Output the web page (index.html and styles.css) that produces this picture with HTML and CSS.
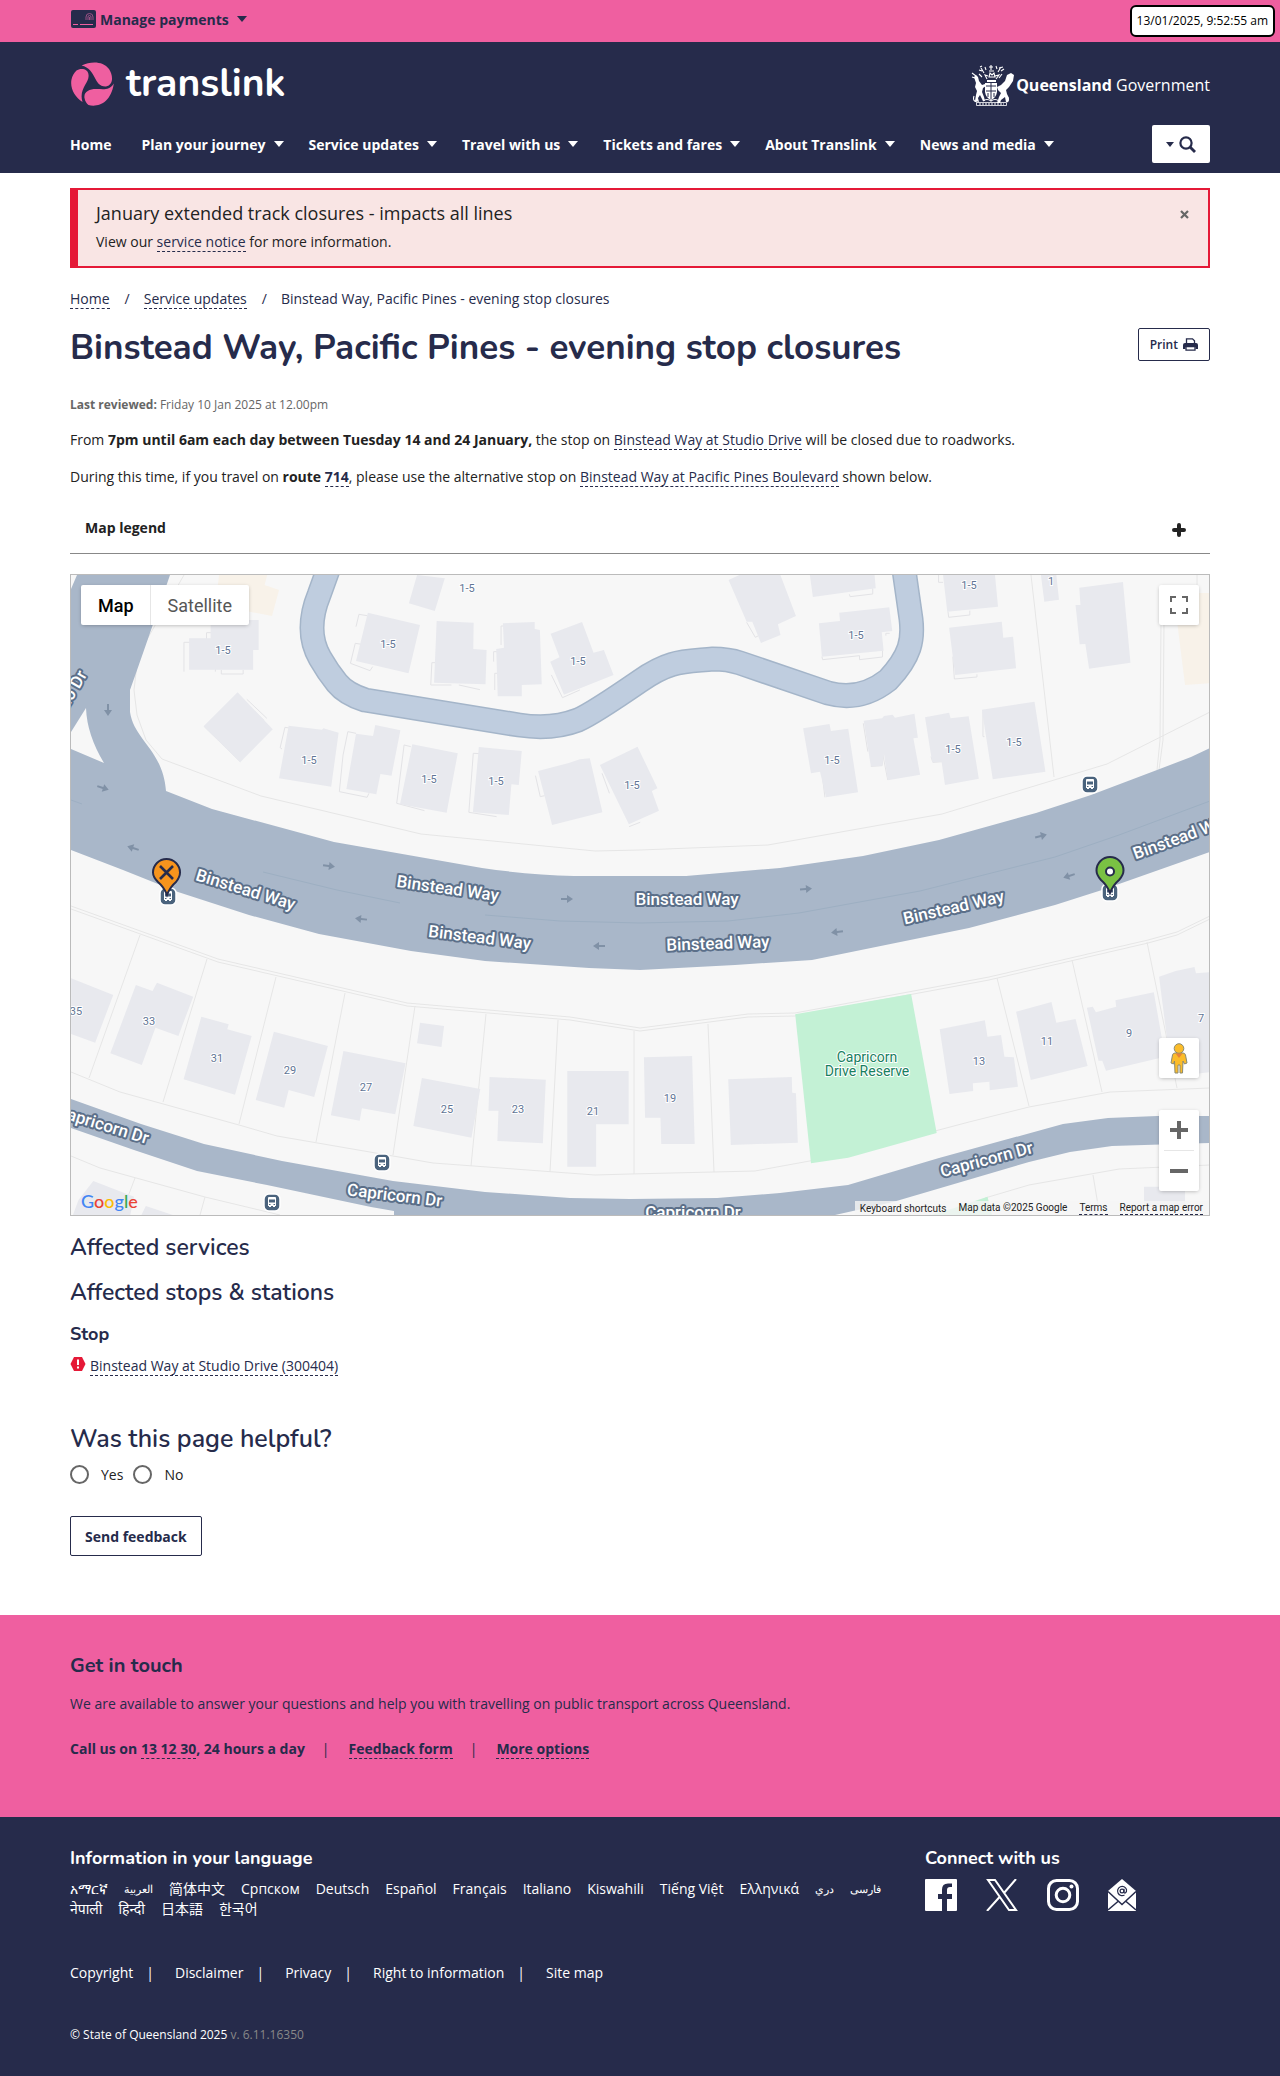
FILE: index.html
```html
<!DOCTYPE html>
<html lang="en">
<head>
<meta charset="utf-8">
<meta name="viewport" content="width=device-width, initial-scale=1">
<title>Binstead Way, Pacific Pines - evening stop closures | Translink</title>
<link rel="stylesheet" href="styles.css">
</head>
<body>
<div class="topbar">
  <div class="wrap">
    <button class="payments" type="button">
      <svg width="25" height="18" viewBox="0 0 25 18" aria-hidden="true"><rect width="25" height="18" rx="2" fill="#262b4b"/><path d="M2 14.5h5M9 14.500h13" stroke="#ef5fa0" stroke-width="1"/><path d="M15 10v-3a3.500 3.500 0 0 1 7 0v3M17 10v-3a1.500 1.500 0 0 1 3 0v3M18.500 7v3" fill="none" stroke="#a5558a" stroke-width=".9"/></svg>
      <span>Manage payments</span><i class="caret"></i>
    </button>
  </div>
  <time class="clock">13/01/2025, 9:52:55 am</time>
</div>

<header class="header">
  <div class="wrap">
    <div class="brands">
      <a class="brand" href="#">
        <svg width="43" height="44" viewBox="0 0 43 44" fill="#ef5fa0" aria-hidden="true"><path d="M10.600 3.500C20-1 32-1 38 7C42 13 43 23 35 24.500C22 25 26 7 10.600 3.500Z"/><path d="M5.500 8.500C9 6 17.500 6 17.600 13.500C18 21 7.500 27 11.500 40C4 35-1 27 .4 18C1 14 3 11 5.500 8.500Z"/><path d="M42.800 21.500C38 29 32 27 25 27C18 27 12.500 30 13.500 36C14 39 15.500 41.500 17.500 43C27 45.500 40 41 42.800 21.500Z"/></svg>
        <span>translink</span>
      </a>
      <a class="gov" href="#">
        <svg width="44" height="42" viewBox="0 0 44 42" fill="#fff" stroke="none" aria-hidden="true">
          <path d="M3 13l2-2 2 2 1 4 3 4 3-1 1 2-3 2-1 4 2 5 1 4h-2l-3-6-2 3 1 4-4-1 1-6 1-4-2-4 1-4z"/>
          <path d="M34 17l2-6 4-2 3 2-1 6-4 6-3 3 1 4 2 4-1 4h-2l-1-5-4 3-1 3h-3l2-6 2-4-3-3-1-3 4-2z"/>
          <path d="M14 19h12v9q-1 6-6 8q-5-2-6-8z"/>
          <path d="M15 22h10M15 27h10M20 19v16M17 29v4M23 29v4" stroke="#262b4b" stroke-width="1" fill="none"/>
          <path d="M16 16h9v2h-9z"/>
          <path d="M16 15l-2-4 3 1M25 15l3-4-4 1M18 13l1-4 2 2 2-2 1 4zM20 1v5M18 3h4M18 7h5M13 9l-3-5M11 7l-3-1M9 3l2-1M27 8l3-5M30 7l3-2M28 4l4-1M15 6l-1-3M26 5l-1-3M8 10l3 3M31 10l-3 4M1 9l4 3M1 13l3 1M3 32q-2 5 3 6M36 33q3 3 0 5M12 37q4-3 8 0q4-3 8 0" fill="none" stroke="#fff" stroke-width="1.100"/>
          <path d="M5.500 38.500h30v3h-30z" fill="none" stroke="#fff" stroke-width=".8"/><path d="M8 40h25" stroke="#fff" stroke-dasharray="2 1"/>
        </svg>
        <span><b>Queensland</b> Government</span>
      </a>
    </div>
    <nav class="nav" aria-label="Main">
      <ul>
        <li><a href="#">Home</a></li>
        <li><a href="#">Plan your journey<i class="caret"></i></a></li>
        <li><a href="#">Service updates<i class="caret"></i></a></li>
        <li><a href="#">Travel with us<i class="caret"></i></a></li>
        <li><a href="#">Tickets and fares<i class="caret"></i></a></li>
        <li><a href="#">About Translink<i class="caret"></i></a></li>
        <li><a href="#">News and media<i class="caret"></i></a></li>
      </ul>
      <button class="search" type="button" aria-label="Search"><i class="caret small"></i><svg width="17" height="17" viewBox="0 0 17 17" fill="none" stroke="#262b4b" aria-hidden="true"><circle cx="7" cy="7" r="5.600" stroke-width="2.200"/><path d="M11 11l5 5" stroke-width="2.800"/></svg></button>
    </nav>
  </div>
</header>

<main class="wrap">
  <section class="alert">
    <div>
      <h2>January extended track closures - impacts all lines</h2>
      <p>View our <a href="#">service notice</a> for more information.</p>
    </div>
    <button type="button" class="close" aria-label="Close"><svg width="9" height="9" viewBox="0 0 9 9" aria-hidden="true"><path d="M1 1l7 7M8 1l-7 7" stroke="#666" stroke-width="2.200"/></svg></button>
  </section>

  <nav class="crumbs" aria-label="Breadcrumb"><ol><li><a href="#">Home</a></li><li><a href="#">Service updates</a></li><li>Binstead Way, Pacific Pines - evening stop closures</li></ol></nav>

  <div class="title">
    <h1>Binstead Way, Pacific Pines - evening stop closures</h1>
    <button class="print" type="button">Print <svg width="15" height="13" viewBox="0 0 15 13" aria-hidden="true"><path d="M3.500 6V.8h6l2 2V6" fill="none" stroke="#262b4b" stroke-width="1.300"/><path d="M0 7q0-2 2-2h11q2 0 2 2v4h-2.500v-2h-10v2H0z" fill="#262b4b"/><path d="M3 8.700h9v3.500H3z" fill="#fff" stroke="#262b4b" stroke-width="1.300"/></svg></button>
  </div>

  <p class="reviewed"><b>Last reviewed:</b> Friday 10 Jan 2025 at 12.00pm</p>
  <div class="copy">
    <p>From <b>7pm until 6am each day between Tuesday 14 and 24 January,</b> the stop on <a href="#">Binstead Way at Studio Drive</a> will be closed due to roadworks.</p>
    <p>During this time, if you travel on <b>route <a href="#">714</a></b>, please use the alternative stop on <a href="#">Binstead Way at Pacific Pines Boulevard</a> shown below.</p>
  </div>

  <button class="legend" type="button" aria-expanded="false"><span>Map legend</span><svg width="14" height="14" viewBox="0 0 14 14" aria-hidden="true"><path d="M7 2v10M2 7h10" stroke="#222" stroke-width="4" stroke-linecap="round"/></svg></button>

  <div class="map">
    <svg class="tiles" viewBox="71 575 1138 640" preserveAspectRatio="xMidYMid slice" role="img" aria-label="Map of stops on Binstead Way">
      <defs>
        <g id="bus"><rect x="-8" y="-8" width="16" height="17" rx="5" fill="#4a637d" stroke="#fff" stroke-width="1.500"/><path d="M-4-4q0-1 1-1h6q1 0 1 1v8h-1v1h-2v-1h-2v1h-2v-1h-1z" fill="#fff"/><path d="M-3-2.500h6v3h-6z" fill="#4a637d"/><path d="M-3 2.500h1.500M1.500 2.500h1.500" stroke="#4a637d"/></g>
        <path id="arrow" d="M-6-1h6v-3l6 4-6 4v-3h-6z" fill="#8091a6"/>
      </defs>
      <rect x="71" y="575" width="1138" height="640" fill="#f7f7f7"/>
      <g class="plots">
        <path d="M184 575L161 615 138 655 134 690 137 715 146 740 162 759 261 796 421 834 595 851 640 850 768 845 942 814 1107 764 1210 712"/>
        <path d="M1031 575L1054 777M1197 575V592"/>
        <path d="M71 906L218 959 407 1003 570 1017 640 1028 748 1014 795 1013 989 977 1148 940 1177 932 1210 916" /><path d="M71 909L218 962 407 1006 570 1020 640 1031 748 1017 795 1016 989 980 1148 943 1177 935 1210 919"/>
        <path d="M140 935L89 1078M207 959L163 1102M276 977L239 1124M345 993L316 1142M415 1006L393 1155M486 1014L471 1166M558 1020L550 1172M634 1031V1174M708 1024L714 1172M997 978L1029 1106M1072 960L1102 1092M1147 942L1177 1088"/>
        <path d="M71 1072L120 1092 239 1125 277 1136 393 1156 433 1163 595 1175 630 1174 755 1171 848 1154 969 1122 1029 1107 1110 1092 1210 1088"/>
        <path d="M71 1156L100 1168 205 1197 280 1215M135 1178L121 1215M205 1197L200 1215M985 1198L1029 1185 1119 1169 1210 1165M1093 1175L1098 1205"/>
        <path d="M1161 622L1160 740 1157 770M1164 622L1163 740 1159 770" stroke="#dfe1e4"/>
      </g>
      <g transform="translate(60 565) scale(.37 .3333)">
        <path class="outline" d="M335 320V232H396V203H420V320M436 315V327H495V315M600 552L595 548 608 487 625 490M505 403L559 460M500 412L552 467M390 485L487 590M755 680L765 570 778 500 800 505M755 680L830 697 835 685M910 715L930 540 948 545M910 715L985 737M1105 742L1117 565 1135 566M1105 742L1180 755M1285 632L1298 695 1310 692M1465 625L1485 685M1538 785L1568 772M800 185L808 148 830 152M785 295L798 235 815 238M785 295L838 317 845 305M1002 360L1005 293 1015 293M1002 360H1058M1078 360L1135 374M1175 375V325H1185M1192 240V183H1205M1172 290V260H1182M1328 330L1358 398 1405 375M1330 30"/>
        <path class="beige" d="M430 30H560L553 60 592 75 573 153 420 120z"/>
        <path class="house" d="M407 165H537V255H522V314H349V220H407zM480 382L575 493 487 592 388 484zM618 482L708 494 712 490 753 503 733 665 592 640zM852 480L920 496 896 632 866 627 855 688 774 672 800 506 846 513zM952 538L1075 565 1045 743 919 718zM1132 546L1248 558 1240 660 1220 658 1213 750 1116 742zM1292 618L1375 594 1405 583 1432 580 1466 742 1330 780zM965 30L1040 40 1013 138 943 115zM832 143L973 180 942 325 800 288zM1018 168L1118 173 1117 252 1153 255 1150 358 1011 353zM1197 175L1283 171V192L1297 195 1302 358 1248 360V394H1183L1179 252 1200 248zM1326 206L1411 171 1442 263 1470 255 1496 330 1362 389 1325 290 1350 277z"/>
      </g>
      <g transform="translate(630 565) scale(.3763 .3333)">
        <path class="outline" d="M310 172L333 217 340 213M583 88L585 95 645 87V70M510 275L512 284 610 272V284L671 276V255M680 212V205H690M820 30V52H832M845 140L847 157 903 150V137M858 275L862 342 922 336V328M620 475L632 560M640 604L670 602 672 570 685 645M938 440V515H942M800 575L805 592 830 590M510 622L518 697"/>
        <path class="beige" d="M1512 84H1540V355L1475 360 1455 180H1512z"/>
        <path class="house" d="M-80 600L20 545 73 670 58 678 77 737-3 778zM262 45L300 25H398L441 153 393 178 400 210 348 234 325 170 310 170zM478 30H650L653 70 486 96zM502 175L558 168 556 143 689 127 697 198 669 202 674 257 510 275zM832 30H970L978 125 843 140zM848 188L988 170 992 218 1018 215 1026 310 864 330zM1092 30H1133L1140 104 1101 110zM1194 68L1310 51 1330 293 1220 311 1210 237 1195 238 1184 120H1197zM460 490L530 477 534 498 580 491 606 682 521 697 505 620 481 625zM621 467L670 460 675 453 698 449 704 458 756 446 765 518 753 520 771 629 685 646 675 568 670 602 640 604zM784 457L848 443 852 460 900 454 927 641 837 660 828 590 803 592zM935 434L1075 410 1104 620 964 643z"/>
      </g>
      <g transform="translate(60 890) scale(.37 .3333)">
        <path class="house" d="M30 265L144 315 95 458 30 432zM205 285L250 303 262 278 360 320 320 438 258 413 221 525 136 490zM382 380L456 403 452 418 518 438 473 614 334 568zM578 425L724 468 687 621 618 600 606 653 529 630zM766 483L934 520 906 673 816 655 810 692 732 676zM973 398L1038 408 1031 471 965 460zM978 564L1136 597 1112 743 955 708zM1161 561L1313 569 1305 760 1182 753 1185 662H1158zM1371 543H1537V703H1449V830H1371zM90 873L200 920 190 975H35L50 930zM232 948L305 975H220z"/>
      </g>
      <g transform="translate(630 890) scale(.3763 .3333)">
        <path class="park" d="M439 373L747 312 815 729 580 803 481 820zM860 955L950 920 962 975H800z"/>
        <path class="house" d="M37 502L165 498 172 762H83L81 683H40zM261 568L430 561 431 608 441 610 446 758 268 765zM823 418L943 391 950 440 986 435 995 500 1020 502 1031 590 956 601 955 575 911 580 912 603 849 612zM1026 365L1120 336 1133 398 1184 387 1216 528 1065 570zM1214 353L1230 350 1238 367 1292 350 1290 331 1392 307 1422 500 1265 542 1255 512 1245 512zM1406 260L1450 243 1500 231 1504 250 1540 247V547L1440 560zM1366 890H1475V950H1366z"/>
      </g>
      <g fill="none" stroke-linejoin="round">
        <path d="M328 570L319 595Q312 612 312 628T320 658T337 683T365 700L519 725Q552 730 578 720Q592 714 640 681C670 660 683 662 713 659Q728 659 740 663L828 693Q860 702 888 680Q904 663 909 648Q913 636 911 619L904 570" stroke="#a4b5c9" stroke-width="25"/>
        <path d="M328 570L319 595Q312 612 312 628T320 658T337 683T365 700L519 725Q552 730 578 720Q592 714 640 681C670 660 683 662 713 659Q728 659 740 663L828 693Q860 702 888 680Q904 663 909 648Q913 636 911 619L904 570" stroke="#bfcddf" stroke-width="22"/>
      </g>
      <g fill="#a9b7c9">
        <path d="M77 575H170Q146 645 130 690V712C134 740 163 750 166 791L212 809 334 842 482 868Q530 875 574 876H686L780 868 863 856 939 840 1036 813 1091 795 1157 770 1191 757 1210 748V852L1153 872 1102 890 1055 905 969 928 812 960 735 965 640 970 589 968 485 961 411 951 319 934 249 915 178 892 123 870 71 850V749L104 763Q87 735 86 708L71 732V589z"/>
        <path d="M71 1099L141 1124 204 1144 282 1161 393 1181 485 1192 570 1198 630 1199 717 1198 780 1193 848 1185 939 1158 1063 1124 1108 1118 1157 1116H1210V1143L1112 1146 1070 1152 1029 1162 893 1202 835 1215H394V1211L371 1207 267 1185 197 1171 134 1150 71 1128z"/>
      </g>
      <path d="M71 800L82 804M263 872L337 890 400 903M485 915L560 921 640 923 728 921 799 913 920 891 1055 857 1119 835 1210 801" fill="none" stroke="#9dafc2"/>
      <g>
        <use href="#arrow" transform="translate(108 710) rotate(90)"/><use href="#arrow" transform="translate(103 788) rotate(18)"/><use href="#arrow" transform="translate(133 848) rotate(198)"/><use href="#arrow" transform="translate(329 866) rotate(8)"/><use href="#arrow" transform="translate(567 899)"/><use href="#arrow" transform="translate(361 919) rotate(186)"/><use href="#arrow" transform="translate(599 946) rotate(180)"/><use href="#arrow" transform="translate(806 889) rotate(-4)"/><use href="#arrow" transform="translate(1041 836) rotate(-14)"/><use href="#arrow" transform="translate(1069 876) rotate(162)"/><use href="#arrow" transform="translate(837 932) rotate(172)"/>
      </g>
      <g class="road">
        <text transform="translate(244 895) rotate(17)">Binstead Way</text>
        <text transform="translate(447 894) rotate(8)">Binstead Way</text>
        <text transform="translate(687 905)">Binstead Way</text>
        <text transform="translate(479 943) rotate(7)">Binstead Way</text>
        <text transform="translate(718 949) rotate(-2)">Binstead Way</text>
        <text transform="translate(955 913) rotate(-13)">Binstead Way</text>
        <text transform="translate(1184 842) rotate(-20)">Binstead Way</text>
        <text transform="translate(101 1130) rotate(17)">Capricorn Dr</text>
        <text transform="translate(394 1201) rotate(7)">Capricorn Dr</text>
        <text transform="translate(693 1218)">Capricorn Dr</text>
        <text transform="translate(988 1165) rotate(-15)">Capricorn Dr</text>
        <text transform="translate(70 705) rotate(-60)">Studio Dr</text>
      </g>
      <g class="num">
        <text x="223" y="654">1-5</text><text x="467" y="592">1-5</text><text x="388" y="648">1-5</text><text x="578" y="665">1-5</text><text x="309" y="764">1-5</text><text x="429" y="783">1-5</text><text x="496" y="785">1-5</text><text x="632" y="789">1-5</text><text x="856" y="639">1-5</text><text x="969" y="589">1-5</text><text x="1051" y="585">1</text><text x="832" y="764">1-5</text><text x="953" y="753">1-5</text><text x="1014" y="746">1-5</text>
        <text x="76" y="1015">35</text><text x="149" y="1025">33</text><text x="217" y="1062">31</text><text x="290" y="1074">29</text><text x="366" y="1091">27</text><text x="447" y="1113">25</text><text x="518" y="1113">23</text><text x="593" y="1115">21</text><text x="670" y="1102">19</text><text x="979" y="1065">13</text><text x="1047" y="1045">11</text><text x="1129" y="1037">9</text><text x="1201" y="1022">7</text>
      </g>
      <g class="parkname"><text x="867" y="1062">Capricorn</text><text x="867" y="1076">Drive Reserve</text></g>
      <use href="#bus" x="1090" y="784"/><use href="#bus" x="382" y="1162"/><use href="#bus" x="272" y="1202"/><use href="#bus" x="168" y="896"/><use href="#bus" x="1110" y="892"/>
      <g stroke="#262b4b" stroke-width="2">
        <path d="M167 895Q164 887 158 882Q153 877 153 872.500A13.500 13.500 0 0 1 180 872.500Q180 877 176 882Q170 887 167 895z" fill="#f7941d"/><path d="M160 866l13 13M173 866l-13 13" stroke-width="2.600"/>
        <path d="M1110 893Q1107 885 1101 880Q1096.500 875 1096.500 870.500A13.500 13.500 0 0 1 1123.500 870.500Q1123.500 875 1119 880Q1113 885 1110 893z" fill="#7ac143"/><circle cx="1110" cy="871.500" r="4" fill="#fff"/>
      </g>
    </svg>
    <div class="maptype"><button type="button" class="on">Map</button><button type="button">Satellite</button></div>
    <button type="button" class="ctl full" aria-label="Toggle fullscreen view"><svg width="18" height="18" viewBox="0 0 18 18" fill="none" stroke="#666" stroke-width="2" aria-hidden="true"><path d="M1 6V1h5M12 1h5v5M17 12v5h-5M6 17H1v-5"/></svg></button>
    <div class="stack">
      <button type="button" class="ctl" aria-label="Street View"><svg width="18" height="31" viewBox="0 0 18 31" fill="#fbbc2a" stroke="#8a8a72" aria-hidden="true"><path d="M5 10h8q2 0 2.500 2l1.500 8-2.500 1-1.500-3-.5 12H10V22H8v8H5L4.500 18 3.500 21 1 20l1.500-8q.5-2 2.500-2z"/><circle cx="9" cy="5.500" r="4.800"/><path d="M5.500 10.500h7L9 15z" fill="#e8833a" stroke="none"/></svg></button>
      <div class="zoom"><button type="button" aria-label="Zoom in"><svg width="18" height="18" viewBox="0 0 18 18" aria-hidden="true"><path d="M0 9h18M9 0v18" stroke="#666" stroke-width="4"/></svg></button><button type="button" aria-label="Zoom out"><svg width="18" height="18" viewBox="0 0 18 18" aria-hidden="true"><path d="M0 9h18" stroke="#666" stroke-width="4"/></svg></button></div>
    </div>
    <a class="google" href="#"><span class="b">G</span><span class="r">o</span><span class="y">o</span><span class="b">g</span><span class="g">l</span><span class="r">e</span></a>
    <div class="attrib"><button type="button">Keyboard shortcuts</button><span>Map data ©2025 Google</span><a href="#">Terms</a><a href="#">Report a map error</a></div>
  </div>

  <h2 class="h2">Affected services</h2>
  <h2 class="h2">Affected stops &amp; stations</h2>
  <h3 class="h3">Stop</h3>
  <p class="stop"><svg width="16" height="14" viewBox="0 0 16 14" aria-hidden="true"><path d="M4 0h8l3.500 7L12 14H4L.5 7z" fill="#e51937"/><path d="M8 2.500v5.500M8 9.500v2" stroke="#fff" stroke-width="2"/></svg><a href="#">Binstead Way at Studio Drive (300404)</a></p>

  <form class="feedback">
    <fieldset>
      <legend>Was this page helpful?</legend>
      <div class="choices"><label><input type="radio" name="helpful" value="yes">Yes</label><label><input type="radio" name="helpful" value="no">No</label></div>
    </fieldset>
    <button type="button" class="send">Send feedback</button>
  </form>
</main>

<section class="touch">
  <div class="wrap">
    <h2>Get in touch</h2>
    <p>We are available to answer your questions and help you with travelling on public transport across Queensland.</p>
    <ul><li>Call us on <a href="#">13 12 30</a>, 24 hours a day</li><li><a href="#">Feedback form</a></li><li><a href="#">More options</a></li></ul>
  </div>
</section>

<footer class="footer">
  <div class="wrap">
    <div class="cols">
      <section>
        <h2>Information in your language</h2>
        <ul class="langs"><li><a href="#" lang="am">አማርኛ</a></li><li class="arabic"><a href="#" lang="ar">العربية</a></li><li><a href="#" lang="zh">简体中文</a></li><li><a href="#" lang="sr">Српском</a></li><li><a href="#" lang="de">Deutsch</a></li><li><a href="#" lang="es">Español</a></li><li><a href="#" lang="fr">Français</a></li><li><a href="#" lang="it">Italiano</a></li><li><a href="#" lang="sw">Kiswahili</a></li><li><a href="#" lang="vi">Tiếng Việt</a></li><li><a href="#" lang="el">Ελληνικά</a></li><li class="arabic"><a href="#" lang="prs">دري</a></li><li class="arabic"><a href="#" lang="fa">فارسی</a></li><li><a href="#" lang="ne">नेपाली</a></li><li><a href="#" lang="hi">हिन्दी</a></li><li><a href="#" lang="ja">日本語</a></li><li><a href="#" lang="ko">한국어</a></li></ul>
      </section>
      <section>
        <h2>Connect with us</h2>
        <div class="social">
          <a href="#" aria-label="Facebook"><svg width="32" height="32" viewBox="0 0 32 32"><path fill="#fff" d="M1 0h30q1 0 1 1v30q0 1-1 1H22V20h5V15h-5v-4q0-3 3-3h2V4.500h-4q-6 0-6 6V15h-4v5h4v12H1q-1 0-1-1V1q0-1 1-1z"/></svg></a>
          <a href="#" aria-label="X"><svg width="32" height="32" viewBox="0 0 32 32" fill="none" stroke="#fff" stroke-width="2"><path d="M2 1h7l21 30h-7zM30 0L18 14M1 32l13-14.500"/></svg></a>
          <a href="#" aria-label="Instagram"><svg width="32" height="32" viewBox="0 0 32 32" fill="none" stroke="#fff" stroke-width="3"><rect x="1.500" y="1.500" width="29" height="29" rx="8"/><circle cx="16" cy="16" r="6.800"/><circle cx="24.500" cy="7.500" r="2" fill="#fff" stroke="none"/></svg></a>
          <a href="#" aria-label="Email"><svg width="28" height="32" viewBox="0 0 28 32"><path fill="#fff" d="M14 0l14 12v20H0V12z"/><path d="M0 12.500l14 13 14-13M0 31l10.500-9M28 31l-10.500-9" fill="none" stroke="#262b4b" stroke-width="1.500"/><circle cx="14" cy="12" r="1.900" fill="none" stroke="#262b4b" stroke-width="1.200"/><path d="M16 9.800v3q0 1.500 1.300 1.200Q19 13 18.500 10.500A4.600 4.600 0 1 0 16.500 16" fill="none" stroke="#262b4b" stroke-width="1.200"/></svg></a>
        </div>
      </section>
    </div>
    <ul class="legal"><li><a href="#">Copyright</a></li><li><a href="#">Disclaimer</a></li><li><a href="#">Privacy</a></li><li><a href="#">Right to information</a></li><li><a href="#">Site map</a></li></ul>
    <p class="copyright">© State of Queensland 2025 <span>v. 6.11.16350</span></p>
  </div>
</footer>
</body>
</html>
```
FILE: styles.css
```css
* { box-sizing: border-box; }
body { margin: 0; background: #fff; color: #222; font: 14px/21px "Open Sans", "Noto Sans", sans-serif; }
h1, h2, h3, p, ul, ol, fieldset { margin: 0; padding: 0; }
ul, ol { list-style: none; }
fieldset { border: 0; }
button { font: inherit; color: inherit; margin: 0; padding: 0; border: 0; background: none; cursor: pointer; }
svg { display: block; }
a { color: #262b4b; text-decoration: none; border-bottom: 1px dashed #262b4b; }
b { font-weight: 700; }
.wrap { box-sizing: content-box; max-width: 1140px; margin: 0 auto; padding: 0 16px; }
.caret { display: inline-block; border: 5px solid transparent; border-top: 6px solid; border-bottom: 0; }
.caret.small { border-width: 5px 4px 0; }

.topbar { position: relative; background: #ef5fa0; padding: 8px 0 12px; }
.payments { display: flex; align-items: center; height: 22px; gap: 4px; padding-left: 1px; color: #262b4b; font-weight: 700; }
.payments .caret { margin-left: 4px; }
.clock { position: absolute; top: 5px; right: 5px; padding: 5px; background: #fff; color: #000; border: 2px solid #000; border-radius: 6px; font-size: 12px; line-height: 18px; }

.header { background: #262b4b; color: #fff; }
.header a { color: #fff; border: 0; }
.brands { display: flex; justify-content: space-between; align-items: center; height: 83px; }
.brand { display: flex; align-items: center; gap: 12px; padding-top: 1px; font: 700 39px/44px Nunito, "Open Sans", sans-serif; }
.brand svg { margin-left: 1px; }
.gov { display: flex; align-items: center; gap: 1px; padding-top: 3px; font-size: 16px; }
.nav { display: flex; justify-content: space-between; align-items: center; height: 48px; padding-bottom: 10px; }
.nav ul { display: flex; gap: 25px; font-weight: 700; }
.nav li:first-child { margin-right: 5px; }
.nav li a { display: flex; align-items: center; gap: 8px; }
.search { display: flex; align-items: center; justify-content: center; gap: 5px; width: 58px; height: 38px; background: #fff; border-radius: 2px; color: #262b4b; }

.alert { display: flex; justify-content: space-between; align-items: flex-start; margin-top: 15px; padding: 10px 19px 14px 18px; background: #f9e5e4; border: 2px solid #e51937; border-left-width: 8px; }
.alert h2 { font-size: 18px; line-height: 27px; font-weight: 400; margin-bottom: 4px; }
.close { padding: 10px 0; }
.crumbs { margin-top: 20px; color: #262b4b; }
.crumbs ol { display: flex; }
.crumbs li + li::before { content: "/"; padding: 0 14px 0 15px; }
.title { display: flex; justify-content: space-between; align-items: flex-start; margin-top: 14px; }
h1, .h2, .h3, legend, .touch h2, .footer h2 { font-family: Nunito, "Open Sans", sans-serif; font-weight: 700; color: #262b4b; }
h1 { font-size: 35px; line-height: 50px; }
.print { display: flex; align-items: center; gap: 5px; margin-top: 5px; height: 33px; padding: 0 11px; border: 1px solid #262b4b; border-radius: 2px; color: #262b4b; font-size: 12px; font-weight: 600; }
.reviewed { margin-top: 23px; font-size: 12px; line-height: 18px; color: #666; }
.copy { display: grid; gap: 16px; margin-top: 15px; }
.legend { display: flex; justify-content: space-between; align-items: center; width: 100%; margin-top: 16px; padding: 14px 24px 15px 15px; border-bottom: 1px solid #888; font-weight: 700; }
.legend svg { margin-top: 4px; }

.map { position: relative; height: 642px; margin-top: 20px; border: 1px solid #bbb; overflow: hidden; font-family: Roboto, sans-serif; background: #f7f7f7; }
.tiles { width: 100%; height: 100%; }
.plots path { fill: none; stroke: #e6e6e6; }
.outline { fill: none; stroke: #e3e3e6; vector-effect: non-scaling-stroke; }
.house { fill: #e8e9ee; }
.beige { fill: #f8f2e9; }
.park { fill: #c3f1d5; }
.road { font-size: 17px; font-weight: 500; fill: #fff; stroke: #5b6f89; stroke-width: 4px; stroke-linejoin: round; paint-order: stroke; text-anchor: middle; }
.num { font-size: 11px; fill: #5f7595; stroke: #fff; stroke-width: 2px; paint-order: stroke; text-anchor: middle; }
.parkname { font-size: 14px; fill: #188060; stroke: #fff; stroke-width: 2px; paint-order: stroke; text-anchor: middle; }
.maptype { position: absolute; top: 10px; left: 10px; display: flex; height: 40px; background: #fff; box-shadow: 0 1px 4px -1px #0005; border-radius: 2px; font-size: 18px; color: #565656; }
.maptype button { padding: 0 17px; }
.maptype .on { padding-right: 16px; color: #000; font-weight: 500; border-right: 1px solid #e6e6e6; }
.ctl, .zoom { display: flex; align-items: center; justify-content: center; width: 40px; height: 40px; background: #fff; border-radius: 2px; box-shadow: 0 1px 4px -1px #0005; }
.full { position: absolute; top: 10px; right: 10px; }
.stack { position: absolute; right: 10px; bottom: 24px; display: grid; gap: 32px; }
.zoom { height: 81px; flex-direction: column; }
.zoom button { display: flex; align-items: center; justify-content: center; width: 30px; height: 40px; }
.zoom button + button { border-top: 1px solid #e6e6e6; height: 41px; }
.google { position: absolute; left: 10px; bottom: 4px; border: 0; font: 500 18px/20px "Lato", sans-serif; }
.b { color: #4285f4; } .r { color: #ea4335; } .y { color: #fbbc05; } .g { color: #34a853; }
.attrib { position: absolute; right: 0; bottom: 0; display: flex; gap: 12px; padding: 0 6px 0 5px; height: 14px; background: #f5f5f5cc; font-size: 10px; line-height: 13px; color: #222; }
.attrib a { color: #222; height: 14px; border-bottom-color: #262b4b; }

.h2 { margin-top: 17px; font-size: 23px; line-height: 30px; font-weight: 600; }
.h2 + .h2 { margin-top: 15px; }
.h3 { margin-top: 14px; font-size: 18px; line-height: 24px; }
.stop { display: flex; align-items: flex-start; gap: 4px; margin-top: 10px; }
.stop svg { margin-top: 1px; }
.stop a { line-height: 19px; }
.feedback { margin-top: 45px; }
legend { padding: 0; font-size: 25px; line-height: 36px; font-weight: 600; }
.choices { display: flex; gap: 10px; margin-top: 7px; }
.choices label { display: flex; align-items: center; gap: 12px; }
.choices input { appearance: none; width: 19px; height: 19px; margin: 0; border: 2px solid #666; border-radius: 50%; }
.send { margin-top: 31px; height: 40px; padding: 0 14px; border: 1px solid #262b4b; border-radius: 2px; color: #262b4b; font-weight: 700; }

.touch { margin-top: 59px; padding: 37px 0 58px; background: #ef5fa0; color: #262b4b; }
.touch h2 { font-size: 20px; line-height: 28px; }
.touch p { margin-top: 13px; }
.touch ul { display: flex; margin-top: 24px; font-weight: 700; }
.touch li + li::before { content: "|"; font-weight: 400; padding: 0 19px 0 17px; }

.footer { padding: 29px 0 32px; background: #262b4b; color: #fff; }
.footer a { color: #fff; border: 0; }
.footer h2 { color: #fff; font-size: 18px; line-height: 24px; }
.cols { display: grid; grid-template-columns: 3fr 1fr; }
.langs { display: flex; flex-wrap: wrap; column-gap: 16px; margin-top: 9px; padding-right: 24px; line-height: 20px; font-family: "Open Sans", "Noto Sans", "Noto Sans CJK SC", "Noto Sans CJK KR", sans-serif; }
.langs li { height: 20px; }
.langs .arabic { font-size: 11px; }
.social { display: flex; gap: 29px; margin-top: 9px; }
.legal { display: flex; margin-top: 43px; }
.legal li + li::before { content: "|"; padding: 0 21px 0 13px; }
.copyright { margin-top: 43px; font-size: 12px; line-height: 18px; }
.copyright span { color: #888; }
```
